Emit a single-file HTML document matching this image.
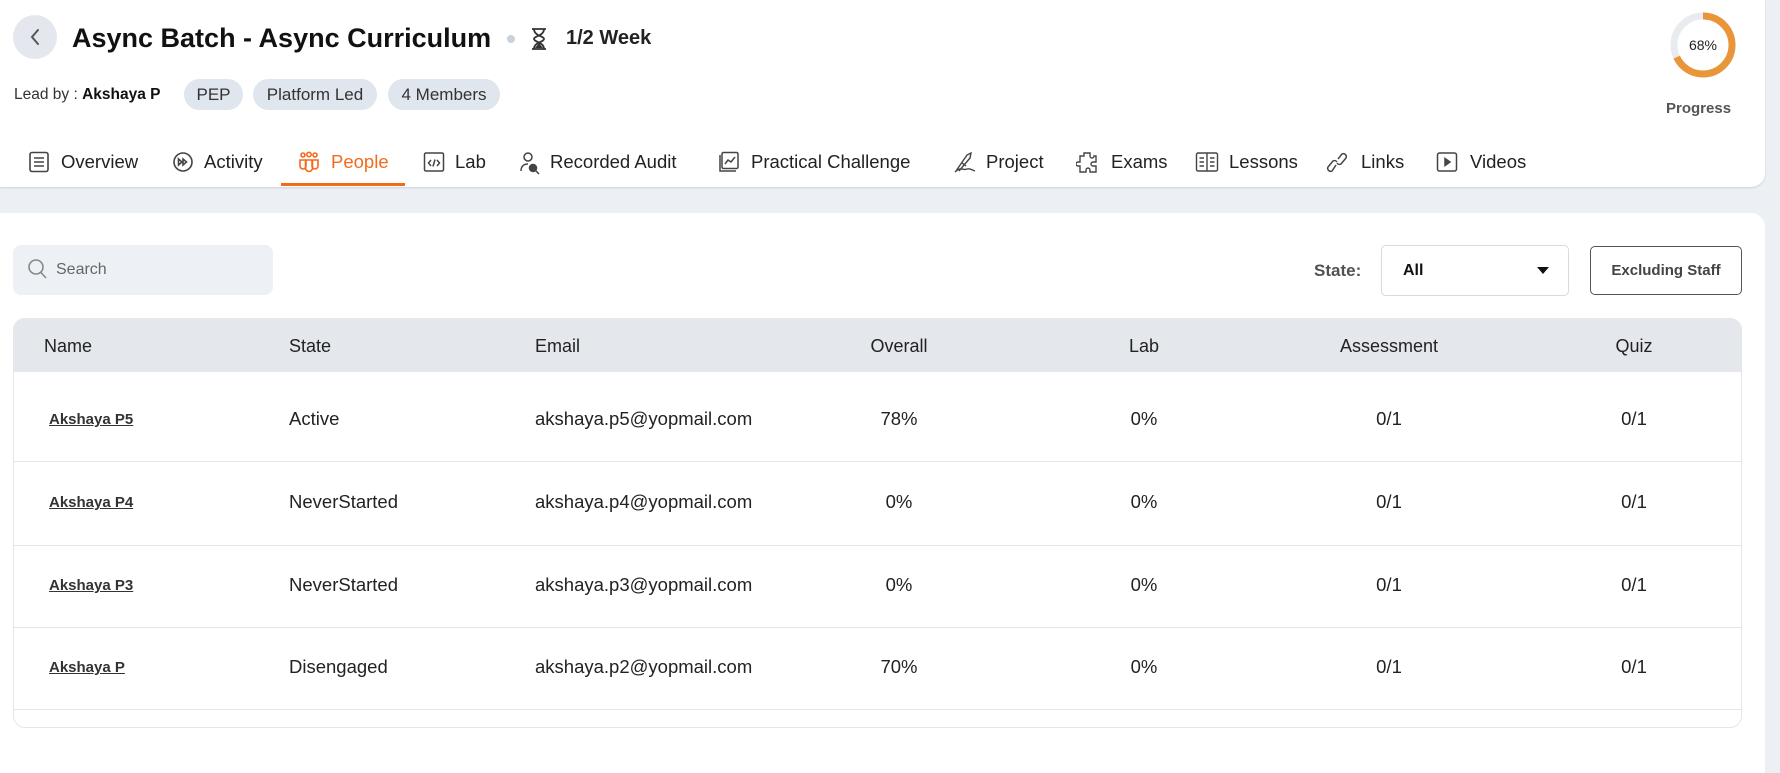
<!DOCTYPE html>
<html><head><meta charset="utf-8"><style>
*{margin:0;padding:0;box-sizing:border-box}
body{width:1780px;height:750px;background:#eceff4;font-family:"Liberation Sans",sans-serif;color:#1f2329;position:relative;overflow:hidden}
.a{position:absolute;white-space:nowrap}
.hdr{position:absolute;left:0;top:0;width:1765px;height:187px;background:#fff;border-bottom-right-radius:14px;box-shadow:0 1px 2px rgba(0,0,0,.12)}
.main{position:absolute;left:0;top:213px;width:1765px;height:560px;background:#fff;border-top-right-radius:14px}
.chip{position:absolute;top:79px;height:31px;border-radius:16px;background:#dfe6ee;font-size:17px;line-height:31px;text-align:center;color:#333}
.tab{position:absolute;top:151px;font-size:18.5px;color:#222;line-height:22px}
.ic{position:absolute;top:151px}
.th{position:absolute;top:336px;font-size:18px;color:#222}
.td{position:absolute;font-size:18.5px;color:#222}
.c{transform:translateX(-50%)}
.nm{font-size:15px;font-weight:bold;text-decoration:underline;color:#333}
.line{position:absolute;left:14px;width:1727px;height:1px;background:#e3e6ea}
</style></head><body>
<div class="hdr"></div>
<div class="a" style="left:13px;top:15px;width:44px;height:44px;border-radius:50%;background:#e4e8ee"></div>
<svg class="a" style="left:27px;top:27px" width="16" height="20" viewBox="0 0 16 20"><path d="M11 3 L5 10 L11 17" stroke="#555" stroke-width="2" fill="none" stroke-linecap="round"/></svg>
<div class="a" style="left:72px;top:23px;font-size:27px;font-weight:bold;color:#111">Async Batch - Async Curriculum</div>
<div class="a" style="left:507px;top:35px;width:8px;height:8px;border-radius:50%;background:#c9d1db"></div>
<svg class="a" style="left:530px;top:27px" width="18" height="24" viewBox="0 0 18 24"><path d="M2 2H16M2 22H16M4 2C4 9 14 9 14 12C14 15 4 15 4 22M14 2C14 9 4 9 4 12C4 15 14 15 14 22" stroke="#333" stroke-width="1.8" fill="none"/><path d="M5 21L9 16L13 21Z" fill="#333"/></svg>
<div class="a" style="left:566px;top:27px;font-size:20px;font-weight:bold;color:#222">1/2 Week</div>
<div class="a" style="left:14px;top:86px;font-size:15.5px;color:#333">Lead by : <b style="color:#111">Akshaya P</b></div>
<div class="chip" style="left:184px;width:59px">PEP</div>
<div class="chip" style="left:253px;width:124px">Platform Led</div>
<div class="chip" style="left:388px;width:112px">4 Members</div>
<svg class="a" style="left:1669px;top:11px" width="68" height="68" viewBox="0 0 68 68"><circle cx="34" cy="34" r="29" stroke="#e8ecf1" stroke-width="7" fill="none"/><circle cx="34" cy="34" r="29" stroke="#e9953a" stroke-width="7" fill="none" stroke-dasharray="123.9 182.2" transform="rotate(-90 34 34)"/><text x="34" y="39" text-anchor="middle" font-size="14" font-family="Liberation Sans" fill="#222">68%</text></svg>
<div class="a" style="left:1666px;top:100px;font-size:15px;font-weight:bold;color:#555">Progress</div>
<!-- tabs -->
<svg class="ic" style="left:28px" width="22" height="22" viewBox="0 0 22 22" fill="none" stroke="#444" stroke-width="1.6"><rect x="2" y="1.5" width="18" height="19" rx="2"/><path d="M6 7H16M6 11H16M6 15H16"/></svg>
<div class="tab" style="left:61px">Overview</div>
<svg class="ic" style="left:172px" width="22" height="22" viewBox="0 0 22 22" fill="none" stroke="#444" stroke-width="1.6"><circle cx="11" cy="11" r="9"/><path d="M6.5 8L10 11L6.5 14ZM11 8L14.5 11L11 14Z"/></svg>
<div class="tab" style="left:204px">Activity</div>
<svg class="ic" style="left:297px" width="24" height="22" viewBox="0 0 24 22" fill="none" stroke="#f26b1d" stroke-width="1.6"><circle cx="6" cy="4" r="2"/><circle cx="12" cy="3.5" r="2.2"/><circle cx="18" cy="4" r="2"/><path d="M3 9H9V15A3 3 0 0 1 3 15ZM15 9H21V15A3 3 0 0 1 15 15ZM8.5 9H15.5V17A3.5 3.5 0 0 1 8.5 17Z"/></svg>
<div class="tab" style="left:331px;color:#f26b1d">People</div>
<div class="a" style="left:281px;top:183px;width:124px;height:3px;background:#f26b1d"></div>
<svg class="ic" style="left:423px" width="22" height="22" viewBox="0 0 22 22" fill="none" stroke="#444" stroke-width="1.5"><rect x="1.5" y="2" width="19" height="18" rx="1.5"/><path d="M8 9L5.5 12L8 15M14 9L16.5 12L14 15M12 8.5L10 15.5"/></svg>
<div class="tab" style="left:455px">Lab</div>
<svg class="ic" style="left:519px" width="22" height="24" viewBox="0 0 22 24" fill="none" stroke="#444" stroke-width="1.5"><circle cx="9" cy="6" r="4"/><path d="M2 20C2 15 5 13 9 13"/><circle cx="14" cy="17" r="3.5" fill="#444"/><path d="M16.5 19.5L20 23"/></svg>
<div class="tab" style="left:550px">Recorded Audit</div>
<svg class="ic" style="left:718px" width="22" height="22" viewBox="0 0 22 22" fill="none" stroke="#444" stroke-width="1.5"><rect x="4" y="1.5" width="16" height="16" rx="1.5"/><path d="M2 4V20H18M7 13L10 9L13 11L17 6"/></svg>
<div class="tab" style="left:751px">Practical Challenge</div>
<svg class="ic" style="left:953px" width="24" height="22" viewBox="0 0 24 22" fill="none" stroke="#444" stroke-width="1.4"><path d="M3 20L14 4L18 2L17 7L6 20M9 12L13 15M2 21C8 15 10 20 14 18C17 17 19 19 22 20"/></svg>
<div class="tab" style="left:986px">Project</div>
<svg class="ic" style="left:1076px" width="22" height="24" viewBox="0 0 22 24" fill="none" stroke="#444" stroke-width="1.4"><path d="M8 2H14V5A2 2 0 0 0 18 5H20V11H17A2 2 0 0 0 17 15H20V21H14V19A2 2 0 0 0 10 19V21H4V15H2A2 2 0 0 1 2 11H4V5H8Z"/></svg>
<div class="tab" style="left:1111px">Exams</div>
<svg class="ic" style="left:1195px" width="24" height="22" viewBox="0 0 24 22" fill="none" stroke="#444" stroke-width="1.4"><rect x="1.5" y="2" width="21" height="18" rx="1.5"/><path d="M12 2V20M4.5 7H9M4.5 11H9M4.5 15H9M15 7H19.5M15 11H19.5M15 15H19.5"/></svg>
<div class="tab" style="left:1229px">Lessons</div>
<svg class="ic" style="left:1326px" width="22" height="24" viewBox="0 0 22 24" fill="none" stroke="#444" stroke-width="1.5"><path d="M12 8L16 3A3 3 0 0 1 20 7L15 13A3 3 0 0 1 11 12M10 14L6 20A3 3 0 0 1 2 16L7 10A3 3 0 0 1 11 11"/></svg>
<div class="tab" style="left:1361px">Links</div>
<svg class="ic" style="left:1436px" width="22" height="22" viewBox="0 0 22 22" fill="none" stroke="#444" stroke-width="1.5"><rect x="1.5" y="2" width="19" height="18" rx="2"/><path d="M9 7.5L14 11L9 14.5Z" fill="#444"/></svg>
<div class="tab" style="left:1470px">Videos</div>

<div class="main"></div>
<div class="a" style="left:13px;top:245px;width:260px;height:50px;border-radius:8px;background:#edf0f4"></div>
<svg class="a" style="left:27px;top:258px" width="22" height="24" viewBox="0 0 22 24" fill="none" stroke="#888" stroke-width="1.6"><circle cx="9" cy="9" r="7"/><path d="M14 14.5L19 20"/></svg>
<div class="a" style="left:56px;top:261px;font-size:16px;color:#666">Search</div>
<div class="a" style="left:1314px;top:261px;font-size:17px;color:#333;font-weight:bold;opacity:.85">State:</div>
<div class="a" style="left:1381px;top:245px;width:188px;height:51px;border:1px solid #d3dbe6;border-radius:5px;background:#fff"></div>
<div class="a" style="left:1403px;top:262px;font-size:16px;font-weight:bold;color:#111">All</div>
<svg class="a" style="left:1536px;top:266px" width="14" height="9" viewBox="0 0 14 9"><path d="M1 1H13L7 8Z" fill="#111"/></svg>
<div class="a" style="left:1590px;top:246px;width:152px;height:49px;border:1px solid #555;border-radius:5px;background:#fff;font-size:15px;font-weight:bold;color:#444;text-align:center;line-height:47px">Excluding Staff</div>

<div class="a" style="left:13px;top:318px;width:1729px;height:410px;border:1px solid #e3e6ea;border-radius:12px;background:#fff"></div>
<div class="a" style="left:13px;top:318px;width:1729px;height:54px;background:#e4e7ec;border-radius:12px 12px 0 0"></div>
<div class="th" style="left:44px">Name</div>
<div class="th" style="left:289px">State</div>
<div class="th" style="left:535px">Email</div>
<div class="th c" style="left:899px">Overall</div>
<div class="th c" style="left:1144px">Lab</div>
<div class="th c" style="left:1389px">Assessment</div>
<div class="th c" style="left:1634px">Quiz</div>

<div class="line" style="top:461px"></div>
<div class="line" style="top:545px"></div>
<div class="line" style="top:627px"></div>
<div class="line" style="top:709px"></div>

<div class="td nm" style="left:49px;top:411px">Akshaya P5</div>
<div class="td" style="left:289px;top:408px">Active</div>
<div class="td" style="left:535px;top:408px">akshaya.p5@yopmail.com</div>
<div class="td c" style="left:899px;top:408px">78%</div>
<div class="td c" style="left:1144px;top:408px">0%</div>
<div class="td c" style="left:1389px;top:408px">0/1</div>
<div class="td c" style="left:1634px;top:408px">0/1</div>

<div class="td nm" style="left:49px;top:494px">Akshaya P4</div>
<div class="td" style="left:289px;top:491px">NeverStarted</div>
<div class="td" style="left:535px;top:491px">akshaya.p4@yopmail.com</div>
<div class="td c" style="left:899px;top:491px">0%</div>
<div class="td c" style="left:1144px;top:491px">0%</div>
<div class="td c" style="left:1389px;top:491px">0/1</div>
<div class="td c" style="left:1634px;top:491px">0/1</div>

<div class="td nm" style="left:49px;top:577px">Akshaya P3</div>
<div class="td" style="left:289px;top:574px">NeverStarted</div>
<div class="td" style="left:535px;top:574px">akshaya.p3@yopmail.com</div>
<div class="td c" style="left:899px;top:574px">0%</div>
<div class="td c" style="left:1144px;top:574px">0%</div>
<div class="td c" style="left:1389px;top:574px">0/1</div>
<div class="td c" style="left:1634px;top:574px">0/1</div>

<div class="td nm" style="left:49px;top:659px">Akshaya P</div>
<div class="td" style="left:289px;top:656px">Disengaged</div>
<div class="td" style="left:535px;top:656px">akshaya.p2@yopmail.com</div>
<div class="td c" style="left:899px;top:656px">70%</div>
<div class="td c" style="left:1144px;top:656px">0%</div>
<div class="td c" style="left:1389px;top:656px">0/1</div>
<div class="td c" style="left:1634px;top:656px">0/1</div>
</body></html>
